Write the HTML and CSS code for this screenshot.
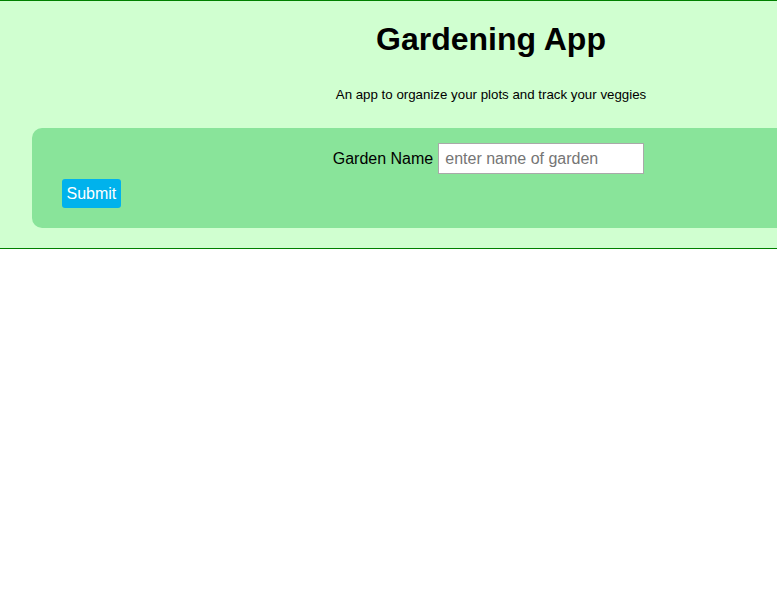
FILE: index.html
```html
<!DOCTYPE html>
<html>
<head>
<meta charset="utf-8">
<link rel="stylesheet" href="styles.css">
</head>
<body>
<header class="app">
  <h1 class="title">Gardening App</h1>
  <p class="subtitle">An app to organize your plots and track your veggies</p>
  <form class="garden-form">
    <div class="row">
      <label class="label" for="gname">Garden Name</label>
      <input class="input" id="gname" type="text" placeholder="enter name of garden">
    </div>
    <button class="submit" type="button">Submit</button>
  </form>
</header>
</body>
</html>
```
FILE: styles.css
```css
html, body {
  margin: 0;
  padding: 0;
  background: #ffffff;
  font-family: "Liberation Sans", Arial, sans-serif;
}
.app {
  width: 982px;
  background: #d0ffd0;
  border-top: 1px solid #008000;
  border-bottom: 1px solid #008000;
  padding: 20px 0 20px;
  box-sizing: border-box;
  text-align: center;
}
.title {
  margin: 0;
  font-size: 32px;
  font-weight: bold;
  line-height: 37px;
  color: #000;
}
.subtitle {
  margin: 29px 0 0;
  font-size: 13.3px;
  line-height: 15px;
  color: #000;
}
.garden-form {
  margin: 26px 32px 0;
  background: #89e49a;
  border-radius: 10px;
  padding: 15px 30px 20px;
  text-align: left;
}
.row {
  display: flex;
  justify-content: center;
  align-items: center;
  gap: 5px;
  margin-right: 5px;
}
.label {
  font-size: 16px;
  color: #000;
}
.input {
  width: 206px;
  height: 31px;
  box-sizing: border-box;
  border: 1px solid #a9a9a9;
  padding: 0 6px;
  font-family: "Liberation Sans", Arial, sans-serif;
  font-size: 16px;
  background: #fff;
}
.input::placeholder {
  color: #757575;
}
.submit {
  display: block;
  margin-top: 5px;
  background: #00b2ec;
  color: #fff;
  border: none;
  border-radius: 3px;
  font-family: "Liberation Sans", Arial, sans-serif;
  font-size: 16px;
  padding: 0 4.5px;
  height: 29px;
}
```
